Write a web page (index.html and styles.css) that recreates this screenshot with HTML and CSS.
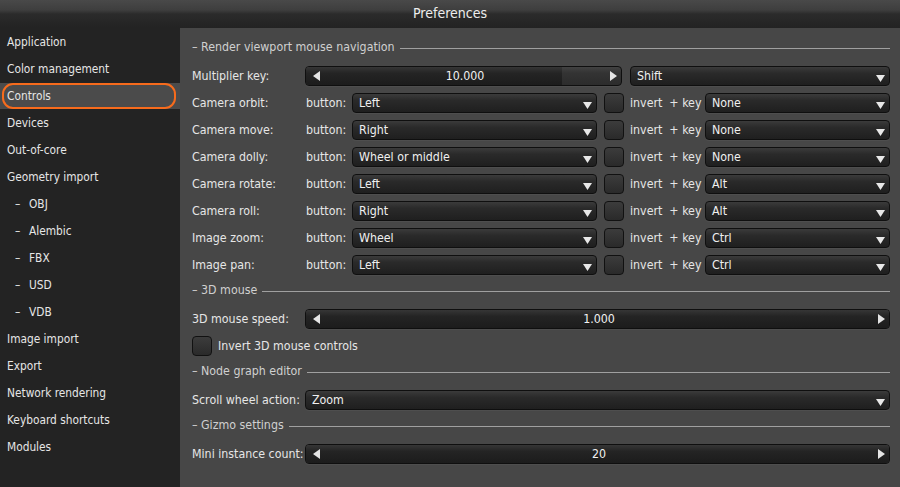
FILE: index.html
```html
<!DOCTYPE html>
<html>
<head>
<meta charset="utf-8">
<link rel="stylesheet" href="styles.css">
</head>
<body>
<div class="window">
  <header class="titlebar">Preferences</header>
  <div class="main">
    <nav class="sidebar">
      <div class="nav-item">Application</div>
      <div class="nav-item">Color management</div>
      <div class="nav-item selected"><div class="band"><span class="ring">Controls</span></div></div>
      <div class="nav-item">Devices</div>
      <div class="nav-item">Out-of-core</div>
      <div class="nav-item">Geometry import</div>
      <div class="nav-item sub"><span class="dash">–</span>OBJ</div>
      <div class="nav-item sub"><span class="dash">–</span>Alembic</div>
      <div class="nav-item sub"><span class="dash">–</span>FBX</div>
      <div class="nav-item sub"><span class="dash">–</span>USD</div>
      <div class="nav-item sub"><span class="dash">–</span>VDB</div>
      <div class="nav-item">Image import</div>
      <div class="nav-item">Export</div>
      <div class="nav-item">Network rendering</div>
      <div class="nav-item">Keyboard shortcuts</div>
      <div class="nav-item">Modules</div>
    </nav>

    <section class="content">
      <div class="group-title"><span>– Render viewport mouse navigation</span><i class="rule"></i></div>

      <div class="row">
        <span class="label">Multiplier key:</span>
        <div class="slider mult">
          <div class="fill" style="width:81.4%"></div>
          <div class="slider-face">
            <svg class="arr" width="7" height="10" viewBox="0 0 7 10"><path d="M7 0V10L0 5Z"/></svg>
            <span class="value">10.000</span>
            <svg class="arr" width="7" height="10" viewBox="0 0 7 10"><path d="M0 0V10L7 5Z"/></svg>
          </div>
        </div>
        <div class="dropdown grow"><span>Shift</span><svg class="caret" width="9" height="7" viewBox="0 0 9 7"><path d="M0 0H9L4.5 7Z"/></svg></div>
      </div>

      <div class="row">
        <span class="label">Camera orbit:</span><span class="sub-label">button:</span>
        <div class="dropdown btn"><span>Left</span><svg class="caret" width="9" height="7" viewBox="0 0 9 7"><path d="M0 0H9L4.5 7Z"/></svg></div>
        <span class="checkbox"></span><span class="inv">invert&nbsp; + key</span>
        <div class="dropdown grow"><span>None</span><svg class="caret" width="9" height="7" viewBox="0 0 9 7"><path d="M0 0H9L4.5 7Z"/></svg></div>
      </div>
      <div class="row">
        <span class="label">Camera move:</span><span class="sub-label">button:</span>
        <div class="dropdown btn"><span>Right</span><svg class="caret" width="9" height="7" viewBox="0 0 9 7"><path d="M0 0H9L4.5 7Z"/></svg></div>
        <span class="checkbox"></span><span class="inv">invert&nbsp; + key</span>
        <div class="dropdown grow"><span>None</span><svg class="caret" width="9" height="7" viewBox="0 0 9 7"><path d="M0 0H9L4.5 7Z"/></svg></div>
      </div>
      <div class="row">
        <span class="label">Camera dolly:</span><span class="sub-label">button:</span>
        <div class="dropdown btn"><span>Wheel or middle</span><svg class="caret" width="9" height="7" viewBox="0 0 9 7"><path d="M0 0H9L4.5 7Z"/></svg></div>
        <span class="checkbox"></span><span class="inv">invert&nbsp; + key</span>
        <div class="dropdown grow"><span>None</span><svg class="caret" width="9" height="7" viewBox="0 0 9 7"><path d="M0 0H9L4.5 7Z"/></svg></div>
      </div>
      <div class="row">
        <span class="label">Camera rotate:</span><span class="sub-label">button:</span>
        <div class="dropdown btn"><span>Left</span><svg class="caret" width="9" height="7" viewBox="0 0 9 7"><path d="M0 0H9L4.5 7Z"/></svg></div>
        <span class="checkbox"></span><span class="inv">invert&nbsp; + key</span>
        <div class="dropdown grow"><span>Alt</span><svg class="caret" width="9" height="7" viewBox="0 0 9 7"><path d="M0 0H9L4.5 7Z"/></svg></div>
      </div>
      <div class="row">
        <span class="label">Camera roll:</span><span class="sub-label">button:</span>
        <div class="dropdown btn"><span>Right</span><svg class="caret" width="9" height="7" viewBox="0 0 9 7"><path d="M0 0H9L4.5 7Z"/></svg></div>
        <span class="checkbox"></span><span class="inv">invert&nbsp; + key</span>
        <div class="dropdown grow"><span>Alt</span><svg class="caret" width="9" height="7" viewBox="0 0 9 7"><path d="M0 0H9L4.5 7Z"/></svg></div>
      </div>
      <div class="row">
        <span class="label">Image zoom:</span><span class="sub-label">button:</span>
        <div class="dropdown btn"><span>Wheel</span><svg class="caret" width="9" height="7" viewBox="0 0 9 7"><path d="M0 0H9L4.5 7Z"/></svg></div>
        <span class="checkbox"></span><span class="inv">invert&nbsp; + key</span>
        <div class="dropdown grow"><span>Ctrl</span><svg class="caret" width="9" height="7" viewBox="0 0 9 7"><path d="M0 0H9L4.5 7Z"/></svg></div>
      </div>
      <div class="row">
        <span class="label">Image pan:</span><span class="sub-label">button:</span>
        <div class="dropdown btn"><span>Left</span><svg class="caret" width="9" height="7" viewBox="0 0 9 7"><path d="M0 0H9L4.5 7Z"/></svg></div>
        <span class="checkbox"></span><span class="inv">invert&nbsp; + key</span>
        <div class="dropdown grow"><span>Ctrl</span><svg class="caret" width="9" height="7" viewBox="0 0 9 7"><path d="M0 0H9L4.5 7Z"/></svg></div>
      </div>

      <div class="group-title"><span>– 3D mouse</span><i class="rule"></i></div>
      <div class="row">
        <span class="label">3D mouse speed:</span>
        <div class="slider grow">
          <div class="fill" style="width:100%"></div>
          <div class="slider-face">
            <svg class="arr" width="7" height="10" viewBox="0 0 7 10"><path d="M7 0V10L0 5Z"/></svg>
            <span class="value">1.000</span>
            <svg class="arr" width="7" height="10" viewBox="0 0 7 10"><path d="M0 0V10L7 5Z"/></svg>
          </div>
        </div>
      </div>
      <div class="row">
        <span class="checkbox first"></span><span class="check-label">Invert 3D mouse controls</span>
      </div>

      <div class="group-title"><span>– Node graph editor</span><i class="rule"></i></div>
      <div class="row">
        <span class="label">Scroll wheel action:</span>
        <div class="dropdown grow"><span>Zoom</span><svg class="caret" width="9" height="7" viewBox="0 0 9 7"><path d="M0 0H9L4.5 7Z"/></svg></div>
      </div>

      <div class="group-title"><span>– Gizmo settings</span><i class="rule"></i></div>
      <div class="row">
        <span class="label">Mini instance count:</span>
        <div class="slider grow">
          <div class="fill" style="width:100%"></div>
          <div class="slider-face">
            <svg class="arr" width="7" height="10" viewBox="0 0 7 10"><path d="M7 0V10L0 5Z"/></svg>
            <span class="value">20</span>
            <svg class="arr" width="7" height="10" viewBox="0 0 7 10"><path d="M0 0V10L7 5Z"/></svg>
          </div>
        </div>
      </div>
    </section>
  </div>
</div>
</body>
</html>
```

FILE: styles.css
```css
* { box-sizing: border-box; }
html, body { margin: 0; padding: 0; }
body {
  width: 900px;
  height: 487px;
  overflow: hidden;
  background: #232323;
  font-family: "DejaVu Sans Condensed", "DejaVu Sans", sans-serif;
  font-size: 12.3px;
  color: #e6e6e6;
}
.window { display: flex; flex-direction: column; height: 487px; }

.titlebar {
  height: 27px;
  flex: none;
  text-align: center;
  line-height: 27px;
  font-size: 14px;
  color: #ededed;
  background: linear-gradient(#494949 0, #3e3e3e 10px, #2b2b2b 14px, #232323 100%);
}

.main { flex: 1; display: flex; min-height: 0; }

.sidebar {
  width: 180px;
  flex: none;
  background: #232323;
  padding-top: 2px;
  font-size: 11.8px;
}
.nav-item {
  height: 27px;
  line-height: 27px;
  padding-left: 7px;
  white-space: nowrap;
}
.nav-item.sub { padding-left: 15px; }
.nav-item .dash { display: inline-block; width: 14px; }
.nav-item.selected { padding: 0 0 1px 0; }
.band {
  height: 26px;
  background: #4b4b4b;
  padding-left: 2px;
}
.ring {
  display: block;
  width: 174px;
  height: 26px;
  line-height: 22px;
  border: 2px solid #f76b1c;
  border-radius: 11px;
  padding-left: 3px;
}

.content {
  flex: 1;
  background: #474747;
  margin-top: 1px;
  padding: 7px 10px 0 12px;
}

.group-title {
  height: 27px;
  display: flex;
  align-items: flex-start;
  padding-top: 4px;
  color: #d0d0d0;
  white-space: nowrap;
}
.group-title span { line-height: 17px; }
.group-title .rule {
  flex: 1;
  height: 1px;
  background: #a0a0a0;
  margin: 9px 0 0 5px;
}

.row {
  height: 27px;
  display: flex;
  align-items: center;
  white-space: nowrap;
}
.label { width: 113px; flex: none; }
.sub-label { width: 47px; flex: none; padding-left: 1px; }

.dropdown, .slider {
  height: 20px;
  border: 1px solid #0f0f0f;
  border-radius: 4px;
  background: linear-gradient(#3b3b3b 0, #2a2a2a 35%, #1f1f1f 100%);
  box-shadow: 0 1px 0 rgba(255,255,255,0.04);
}
.dropdown {
  display: flex;
  align-items: center;
  justify-content: space-between;
  padding: 0 4px 0 6px;
  color: #f0f0f0;
}
.dropdown .caret { fill: #e8e8e8; margin-top: 6px; }
.dropdown.btn { width: 245px; flex: none; }
.grow { flex: 1; min-width: 0; }

.slider {
  display: grid;
  overflow: hidden;
  background: linear-gradient(#424242 0, #333 35%, #2c2c2c 100%);
}
.slider.mult { width: 317px; flex: none; margin-right: 8px; }
.slider .fill {
  grid-area: 1 / 1;
  height: 100%;
  background: linear-gradient(#363636 0, #242424 35%, #1c1c1c 100%);
}
.slider-face {
  grid-area: 1 / 1;
  display: flex;
  align-items: center;
  justify-content: space-between;
  padding: 0 4px 0 7px;
}
.slider .arr { fill: #e4e4e4; flex: none; }
.slider .value { color: #f2f2f2; }

.checkbox {
  width: 20px;
  height: 20px;
  flex: none;
  border: 1px solid #111;
  border-radius: 4px;
  background: linear-gradient(#3c3c3c, #2a2a2a);
  margin: 0 6px 0 7px;
}
.checkbox.first { margin: 0 6px 0 0; }
.inv { width: 75px; flex: none; }
.check-label { color: #e6e6e6; }
```
